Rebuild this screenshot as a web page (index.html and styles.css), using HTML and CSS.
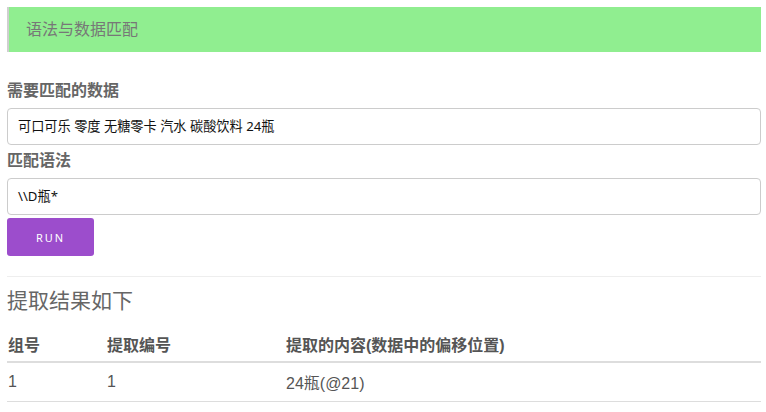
FILE: index.html
```html
<!DOCTYPE html>
<html lang="zh">
<head>
<meta charset="utf-8">
<title>语法与数据匹配</title>
<link rel="stylesheet" href="styles.css">
</head>
<body>
<div class="page">
  <div class="title">语法与数据匹配</div>
  <div class="label first">需要匹配的数据</div>
  <div class="input">可口可乐 零度 无糖零卡 汽水 碳酸饮料 24瓶</div>
  <div class="label">匹配语法</div>
  <div class="input">\\D瓶*</div>
  <button class="run">RUN</button>
  <hr class="sep">
  <h3 class="result">提取结果如下</h3>
  <table class="tbl">
    <thead>
      <tr><th class="c1">组号</th><th class="c2">提取编号</th><th>提取的内容(数据中的偏移位置)</th></tr>
    </thead>
    <tbody>
      <tr><td>1</td><td>1</td><td>24瓶(@21)</td></tr>
    </tbody>
  </table>
</div>
</body>
</html>
```
FILE: styles.css
```css
html, body { margin: 0; padding: 0; background: #fff; }
body { font-family: "Liberation Sans", "Noto Sans CJK SC", sans-serif; color: #555; }
.page { padding: 7px 5px 0 7px; }
.title {
  height: 45px; line-height: 43px; box-sizing: border-box;
  background: #90ee90; border-left: 2px solid #cfcfcf;
  padding-left: 17px; font-size: 16px; color: #777;
  font-family: "Noto Sans CJK SC", sans-serif;
}
.label {
  margin-top: 3px; line-height: 22px; font-size: 16px; font-weight: bold; color: #666;
  font-family: "Noto Sans CJK SC", sans-serif;
}
.label.first { margin-top: 26px; }
.input {
  margin-top: 8px; height: 37px; box-sizing: border-box;
  border: 1px solid #ccc; border-radius: 4px;
  padding: 0 10px; line-height: 35px; font-size: 13.2px; color: #111;
  font-family: "Noto Sans", "Noto Sans CJK SC", sans-serif;
}
.run {
  display: block; margin: 3px 0 0 0; width: 87px; height: 38px;
  background: #9c4dcc; color: #fff; border: none; border-radius: 3px;
  font-family: "Noto Sans", sans-serif; font-size: 11px; letter-spacing: 2px; padding: 0;
}
.sep { margin: 20px 0 0 0; border: 0; border-top: 1px solid #eee; height: 0; }
.result {
  margin: 10px 0 0 0; line-height: 24px; font-size: 21px; font-weight: normal; color: #666;
  font-family: "Noto Sans CJK SC", sans-serif;
}
.tbl { margin-top: 15px; width: 100%; border-collapse: collapse; font-size: 16px; }
.tbl th {
  text-align: left; height: 35px; padding: 0 0 0 1px; border-bottom: 2px solid #ddd;
  font-weight: bold; color: #555; vertical-align: middle;
}
.tbl td {
  height: 38px; padding: 0 0 0 1px; border-bottom: 1px solid #ddd; color: #555; vertical-align: middle;
}
.c1 { width: 98px; }
.c2 { width: 178px; }
```
